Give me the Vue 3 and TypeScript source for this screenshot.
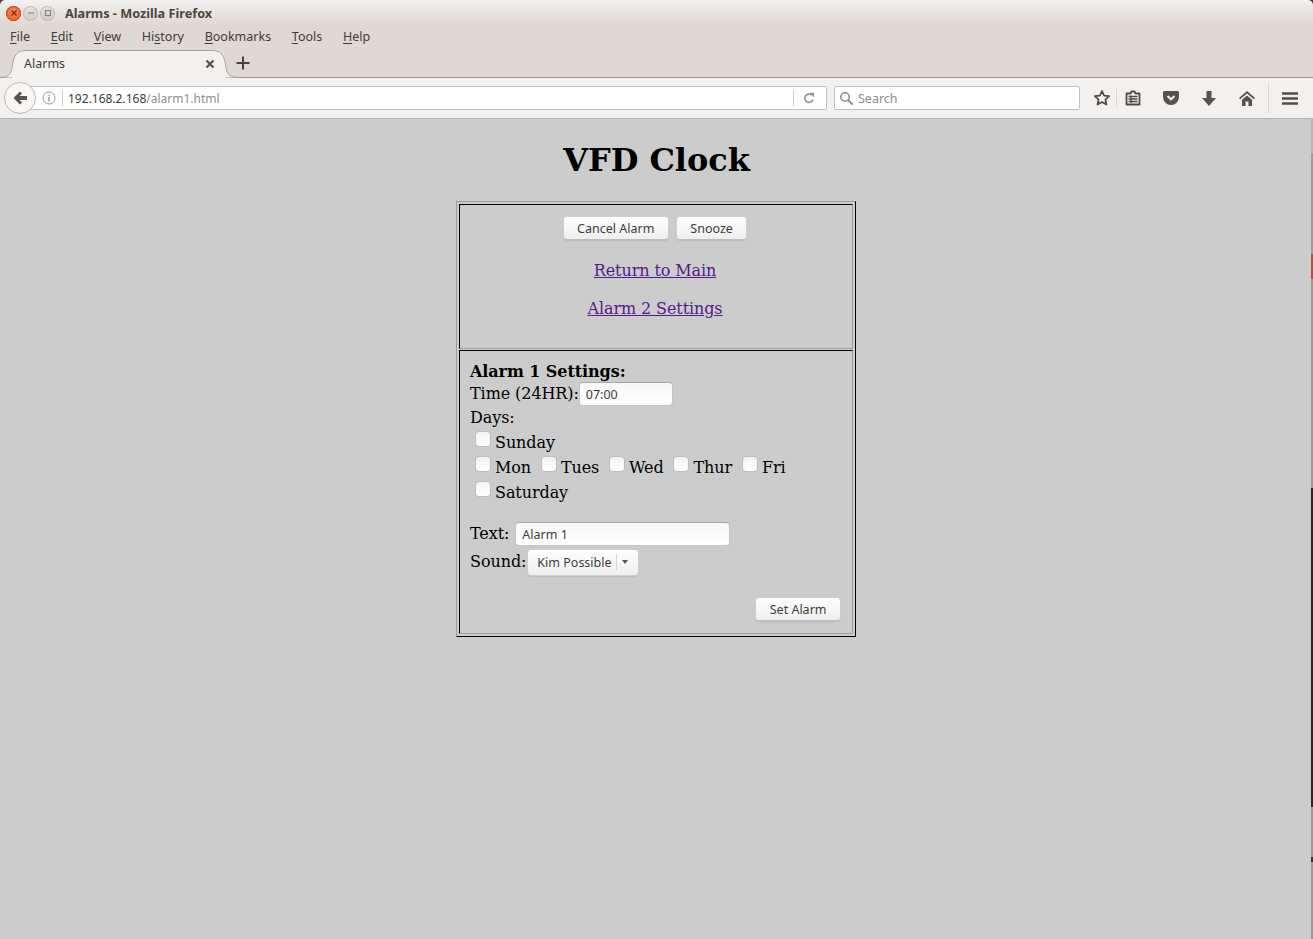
<script setup lang="ts">
const menus = [
  { pre: '', key: 'F', post: 'ile' },
  { pre: '', key: 'E', post: 'dit' },
  { pre: '', key: 'V', post: 'iew' },
  { pre: 'Hi', key: 's', post: 'tory' },
  { pre: '', key: 'B', post: 'ookmarks' },
  { pre: '', key: 'T', post: 'ools' },
  { pre: '', key: 'H', post: 'elp' },
]
const days = ['Mon', 'Tues', 'Wed', 'Thur', 'Fri']
</script>

<template>
  <div class="window">
    <header class="chrome">
      <div class="titlebar">
        <div class="wm">
          <span class="wm-btn close">
            <svg width="8" height="8" viewBox="0 0 8 8"><path d="M1.500 1.500l5 5M6.500 1.500l-5 5" stroke="#7a2a10" stroke-width="1.200" fill="none" /></svg>
          </span>
          <span class="wm-btn">
            <svg width="8" height="8" viewBox="0 0 8 8"><path d="M1 4h6" stroke="#8a8780" stroke-width="1.200" fill="none" /></svg>
          </span>
          <span class="wm-btn">
            <svg width="8" height="8" viewBox="0 0 8 8"><rect x="1.500" y="1.500" width="5" height="5" stroke="#8a8780" stroke-width="1.200" fill="none" /></svg>
          </span>
        </div>
        <span class="title">Alarms - Mozilla Firefox</span>
      </div>
      <nav class="menubar">
        <span v-for="m in menus" :key="m.pre + m.key" class="menu">{{ m.pre }}<u>{{ m.key }}</u>{{ m.post }}</span>
      </nav>
      <div class="tabstrip">
        <div class="tab">
          <svg class="tab-shape" width="238" height="29" viewBox="0 0 238 29">
            <path d="M0 27.500C7 27.500 11 25 12 18 13 11 14 .5 25 .5H213C224 .5 225 11 226 18 227 25 231 27.500 238 27.500" fill="#f3f1ef" stroke="#a8a39d" />
            <rect x="12" y="18" width="214" height="11" fill="#f3f1ef" />
          </svg>
          <span class="tab-label">Alarms</span>
          <svg class="tab-close" width="10" height="10" viewBox="0 0 10 10"><path d="M1.500 1.500l7 7M8.500 1.500l-7 7" stroke="#55524e" stroke-width="2.200" fill="none" /></svg>
        </div>
        <svg class="newtab" width="14" height="14" viewBox="0 0 14 14"><path d="M7 .5v13M.5 7h13" stroke="#45423f" stroke-width="2" fill="none" /></svg>
      </div>
      <div class="navbar">
        <div class="back">
          <svg width="16" height="16" viewBox="0 0 16 16"><path d="M8 1.500L1.500 8 8 14.500l2-2L7.500 10H15V6H7.500L10 3.500z" fill="#55524f" /></svg>
        </div>
        <div class="urlbar">
          <svg class="info" width="14" height="14" viewBox="0 0 14 14">
            <circle cx="7" cy="7" r="6" fill="none" stroke="#9a9a9a" />
            <path d="M7 6v4.500M7 3.500v1.300" stroke="#8a8a8a" stroke-width="1.300" fill="none" />
          </svg>
          <span class="sep url-sep"></span>
          <span class="url"><span class="host">192.168.2.168</span>/alarm1.html</span>
          <span class="sep reload-sep"></span>
          <svg class="reload" width="12" height="12" viewBox="0 0 12 12">
            <path d="M10 7.500A4.200 4.200 0 1 1 8.600 2.900" fill="none" stroke="#8f9296" stroke-width="1.700" />
            <path d="M6.500 0.800h4.700v4.700z" fill="#8f9296" />
          </svg>
        </div>
        <div class="search">
          <svg width="15" height="15" viewBox="0 0 15 15">
            <circle cx="6" cy="6" r="4.200" fill="none" stroke="#8c8c8c" stroke-width="1.500" />
            <path d="M9 9l4.500 4.500" stroke="#8c8c8c" stroke-width="2" fill="none" />
          </svg>
          <span>Search</span>
        </div>
        <div class="tools">
          <svg class="ic-star" width="18" height="18" viewBox="0 0 18 18"><path d="M9 2l2.100 4.600 5 .6-3.700 3.400 1 4.900L9 13l-4.400 2.500 1-4.900L1.900 7.200l5-.6z" fill="#f7f6f4" stroke="#4f4c49" stroke-width="1.800" stroke-linejoin="round" /></svg>
          <span class="tool-sep"></span>
          <svg class="ic-list" width="16" height="16" viewBox="0 0 16 16">
            <path d="M1.500 3.500h4l1-2h3l1 2h4v11h-13z" fill="none" stroke="#4f4c49" stroke-width="1.800" stroke-linejoin="round" />
            <path d="M3.500 6.500h9M3.500 9h9M3.500 11.500h9M6 5.500v7.500" stroke="#4f4c49" stroke-width="1.300" fill="none" />
          </svg>
          <svg class="ic-pocket" width="16" height="14" viewBox="0 0 16 14">
            <path d="M1.500 0h13A1.500 1.500 0 0 1 16 1.500V6A8 8 0 0 1 0 6V1.500A1.500 1.500 0 0 1 1.500 0z" fill="#55524f" />
            <path d="M4.500 5L8 8.300 11.500 5" fill="none" stroke="#f3f1ef" stroke-width="2" />
          </svg>
          <svg class="ic-down" width="14" height="15" viewBox="0 0 14 15"><path d="M4.500 0h5v7H14l-7 8-7-8h4.500z" fill="#55524f" /></svg>
          <svg class="ic-home" width="16" height="15" viewBox="0 0 16 15">
            <path d="M8 0L0 7l1.100 1.200L8 2.400l6.900 5.800L16 7z" fill="#55524f" />
            <path d="M8 4.400L3 8.700V15H6.500V10.500H9.500V15H13V8.700z" fill="#55524f" />
          </svg>
          <span class="tool-sep tall"></span>
          <svg class="ic-menu" width="16" height="13" viewBox="0 0 16 13"><path d="M0 1.500h16M0 6.500h16M0 11.500h16" stroke="#4f4c49" stroke-width="2.600" fill="none" /></svg>
        </div>
      </div>
    </header>

    <main class="page">
      <h1>VFD Clock</h1>
      <div class="table">
        <section class="cell top">
          <div class="actions">
            <button type="button" class="btn">Cancel Alarm</button>
            <button type="button" class="btn">Snooze</button>
          </div>
          <p class="link"><a href="#">Return to Main</a></p>
          <p class="link"><a href="#">Alarm 2 Settings</a></p>
        </section>
        <section class="cell form">
          <div class="heading">Alarm 1 Settings:</div>
          <div class="row time">Time (24HR):<input class="field time-field" value="07:00" /></div>
          <div class="row days-label">Days:</div>
          <div class="row check-row"><label class="check"><input type="checkbox" />Sunday</label></div>
          <div class="row check-row">
            <label v-for="d in days" :key="d" class="check"><input type="checkbox" />{{ d }}</label>
          </div>
          <div class="row check-row"><label class="check"><input type="checkbox" />Saturday</label></div>
          <div class="row text-row">Text:<input class="field text-field" value="Alarm 1" /></div>
          <div class="row sound-row">Sound:<div class="select"><span>Kim Possible</span><i></i><b></b></div></div>
          <div class="submit"><button type="button" class="btn">Set Alarm</button></div>
        </section>
      </div>
    </main>
    <div class="desktop-edge"></div>
  </div>
</template>

<style scoped>
.window { position: relative; width: 1313px; height: 939px; display: flex; flex-direction: column; background: #ccc; overflow: hidden; font-family: "Noto Sans", sans-serif; }
.chrome { flex: none; background: #3c3b37; }
.titlebar { height: 25px; display: flex; align-items: center; padding-left: 6px; background: linear-gradient(#f3f1ef, #e0d8d2); border-radius: 5px 5px 0 0; }
.wm { display: flex; gap: 2px; margin-top: 1px; }
.wm-btn { width: 15px; height: 15px; border-radius: 50%; display: flex; align-items: center; justify-content: center; background: linear-gradient(#e8e5e1, #cfcac5); box-shadow: inset 0 0 0 1px #c2bdb7; }
.wm-btn.close { background: radial-gradient(circle at 50% 40%, #f58a62, #e6521f); box-shadow: inset 0 0 0 1px #cf4a1d; }
.title { margin: 1px 0 0 10px; font-size: 12.700px; font-weight: 700; color: #4a4641; }
.menubar { height: 24px; display: flex; align-items: center; padding: 0 0 2px 10px; box-sizing: border-box; gap: 20.700px; font-size: 12.500px; color: #3f3c39; background: #e0d8d2; }
.menu u { text-underline-offset: 2px; }
.tabstrip { height: 29px; display: flex; align-items: flex-end; border-bottom: 1px solid #9b9690; box-sizing: border-box; background: #e0d8d2; }
.tab { position: relative; width: 230px; height: 29px; margin-bottom: -1px; display: flex; align-items: center; font-size: 12.500px; color: #3f3c39; }
.tab-shape { position: absolute; left: 0; top: 1px; }
.tab-label { position: relative; margin-left: 24px; }
.tab-close { position: absolute; left: 205px; top: 10px; }
.newtab { position: relative; margin: 0 0 7px 6px; }
.navbar { height: 41px; display: flex; align-items: center; background: #f3f1ef; border-bottom: 1px solid #b5b2ae; box-sizing: border-box; position: relative; }
.back { position: absolute; left: 4px; top: 4px; width: 30px; height: 30px; z-index: 1; border-radius: 50%; background: #f7f6f5; border: 1px solid #bdb9b4; display: flex; align-items: center; justify-content: center; }
.urlbar { margin-left: 20px; width: 807px; height: 24px; box-sizing: border-box; display: flex; align-items: center; background: #fff; border: 1px solid #c5c2be; border-radius: 2px; position: relative; font-size: 12px; }
.info { margin-left: 21px; }
.sep { width: 1px; height: 16px; background: #cfccc8; }
.url-sep { margin-left: 6px; }
.url { margin-left: 5px; color: #8e8e8e; flex: 1; }
.host { color: #3a3a3a; }
.reload-sep { margin-right: 9px; }
.reload { margin-right: 11px; }
.search { margin-left: 7px; width: 246px; height: 24px; box-sizing: border-box; display: flex; align-items: center; gap: 4px; padding-left: 4px; background: #fff; border: 1px solid #c5c2be; border-radius: 2px; font-size: 12.500px; color: #8e8e8e; }
.tools { display: flex; align-items: center; position: relative; }
.ic-star { margin-left: 13px; }
.tool-sep { width: 1px; height: 18px; background: #d9d6d2; margin-left: 5px; }
.tool-sep.tall { height: 30px; margin-left: 13px; }
.ic-list { margin-left: 8px; }
.ic-pocket { margin-left: 22px; }
.ic-down { margin-left: 23px; }
.ic-home { margin-left: 23px; }
.ic-menu { margin-left: 13px; }
.desktop-edge { position: absolute; right: 0; top: 119px; bottom: 0; width: 2px; background: linear-gradient(#b8b8b8 0 34px, #9c9c98 34px 135px, #a8583a 135px 160px, #9a9a9a 160px 369px, #23272a 369px 688px, #9a9a9a 688px 738px, #3a2c26 738px 743px, #9a9a9a 743px); }

.page { flex: 1; font-family: "DejaVu Serif", serif; font-size: 16px; letter-spacing: -.08px; color: #000; display: flex; flex-direction: column; align-items: center; }
h1 { margin: 21px 0 21px; font-size: 32px; line-height: 40px; font-weight: 700; letter-spacing: -.06px; }
.table { width: 400px; height: 436px; box-sizing: border-box; padding: 2px; margin-left: -1px; border: 1px solid; border-color: #9d9d9d #000 #000 #9d9d9d; display: flex; flex-direction: column; gap: 1px; }
.cell { box-sizing: border-box; border: 1px solid; border-color: #000 #9d9d9d #9d9d9d #000; }
.top { height: 145px; padding: 11px 2px 0 0; text-align: center; }
.form { flex: 1; padding: 11px 10px 0; line-height: 20px; }
.actions { display: flex; justify-content: center; gap: 7px; }
.btn { height: 24px; padding: 0 13.500px; font: 12.500px "Noto Sans", sans-serif; color: #3f3c39; background: linear-gradient(#fdfdfd, #efefef); border: 1px solid #cfcfcf; border-bottom-color: #bdbdbd; border-radius: 4px; box-shadow: 0 1px 1px rgba(0, 0, 0, .08); }
.link { margin: 0; font-size: 16px; line-height: 20px; letter-spacing: -.1px; }
.actions + .link { margin-top: 21px; }
.link + .link { margin-top: 18px; }
.link a { color: #551a8b; }
.heading { font-weight: 700; height: 20px; }
.row { display: flex; align-items: center; }
.time { height: 24px; }
.field { box-sizing: border-box; height: 24px; font: 12.500px "Noto Sans", sans-serif; color: #3f3c39; padding: 0 6px; background: linear-gradient(#f7f7f7, #fff); border: 1px solid #c4c4c4; border-top-color: #a8a8a8; border-radius: 4px; }
.time-field { width: 94px; margin-left: 0; }
.days-label { height: 24px; }
.check-row { height: 25px; padding-left: 5px; }
.check { display: flex; align-items: center; margin-right: 9.800px; }
.check input { appearance: none; width: 16px; height: 16px; margin: -7px 4px 0 0; border: 1px solid #bdbdbd; border-radius: 4px; background: linear-gradient(#f2f2f2, #fff); }
.text-row { margin-top: 17px; height: 24px; }
.text-field { width: 215px; margin-left: 6px; }
.sound-row { height: 32px; }
.select { display: flex; align-items: center; height: 27px; width: 112px; box-sizing: border-box; margin-left: 1px; padding-left: 9px; font: 12.500px "Noto Sans", sans-serif; letter-spacing: 0; color: #3f3c39; background: linear-gradient(#fdfdfd, #efefef); border: 1px solid #cfcfcf; border-radius: 4px; box-shadow: 0 1px 1px rgba(0, 0, 0, .08); }
.select i { width: 1px; height: 16px; background: #d5d5d5; margin-left: 4px; }
.select b { width: 0; height: 0; margin-left: 5px; border: 3px solid transparent; border-top: 4px solid #555; border-bottom: 0; }
.submit { display: flex; justify-content: flex-end; margin-top: 19px; padding-right: 1px; }
.submit .btn { padding-left: 14px; }
</style>

<style>
html, body { background: #ccc; }
</style>
